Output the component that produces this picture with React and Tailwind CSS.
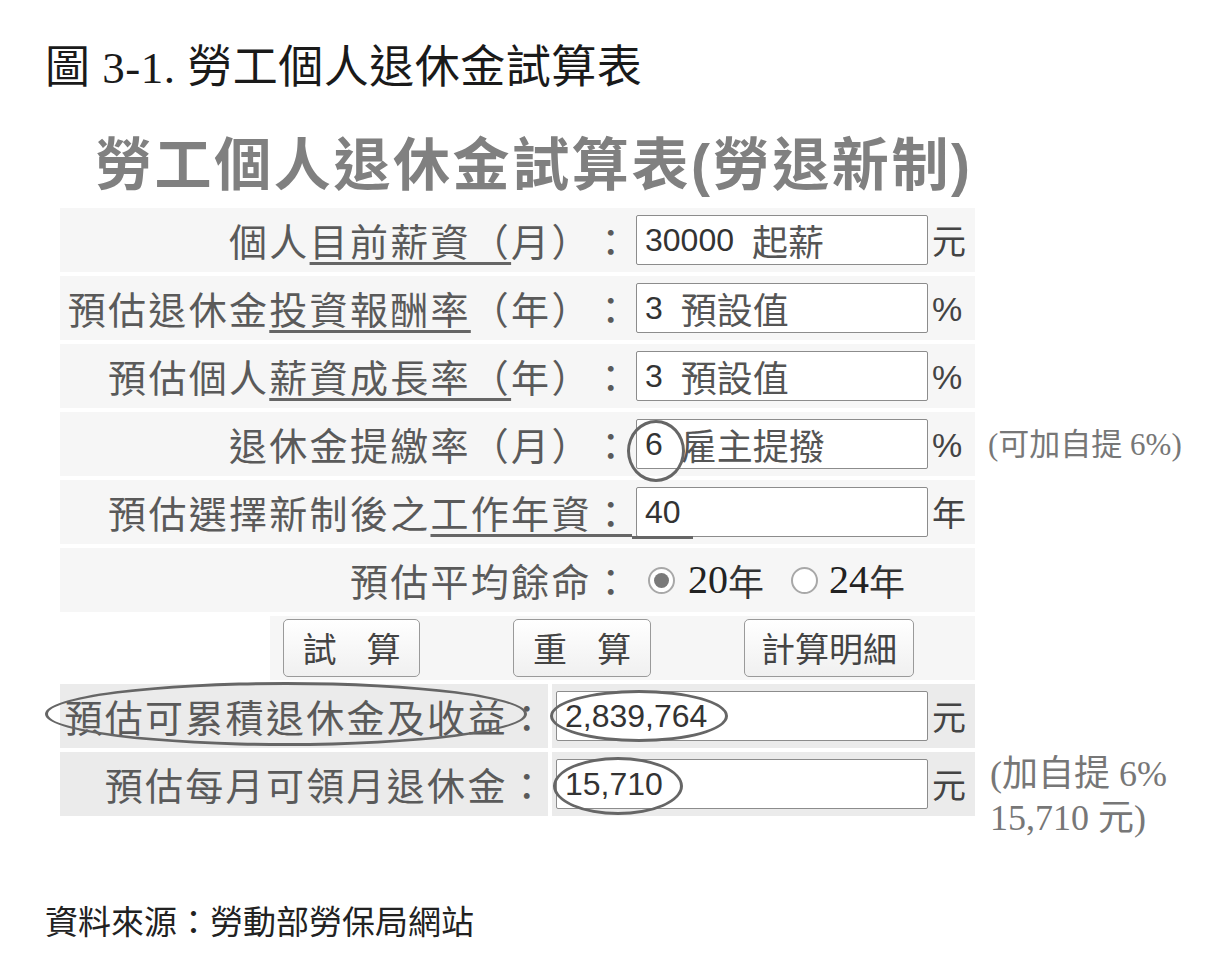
import React from 'react';

const CJK = '"Noto Sans CJK TC", "Liberation Sans", sans-serif';
const SERIF = '"Liberation Serif", "Noto Sans CJK TC", serif';

function Box({ children, wide }) {
  return (
    <div
      className={
        'h-[50px] bg-white border border-[#8c8c8c] rounded-[2px] flex items-center pl-[8px] ' +
        (wide ? 'w-[372px]' : 'w-[292px]')
      }
    >
      {children}
    </div>
  );
}

function Num({ children }) {
  return (
    <span className="text-[32px] leading-none text-[#333]" style={{ fontFamily: '"Liberation Sans", sans-serif' }}>
      {children}
    </span>
  );
}

function Hint({ children }) {
  return <span className="text-[36px] leading-none text-[#555] ml-[18px]">{children}</span>;
}

function Unit({ children }) {
  return <span className="ml-[4px] text-[34px] leading-none text-[#444]">{children}</span>;
}

const LABEL =
  'flex items-center justify-end whitespace-nowrap text-[38px] tracking-[2.3px] text-[#5a5a5a] leading-none [text-spacing-trim:space-all]';

function InputRow({ label, children, unit, note }) {
  return (
    <div className="flex h-[64px] mb-[4px]">
      <div className={'w-[572px] bg-[#f6f6f6] ' + LABEL}>{label}</div>
      <div className="w-[343px] bg-[#f6f6f6] flex items-center pl-[4px]">
        <Box>{children}</Box>
        <Unit>{unit}</Unit>
      </div>
      {note}
    </div>
  );
}

function ResultRow({ label, value, note }) {
  return (
    <div className="flex h-[64px] mb-[4px]">
      <div className={'w-[488px] bg-[#ebebeb] ' + LABEL}>{label}</div>
      <div className="w-[423px] ml-[4px] bg-[#ebebeb] flex items-center pl-[4px]">
        <Box wide>
          <Num>{value}</Num>
        </Box>
        <Unit>元</Unit>
      </div>
      {note}
    </div>
  );
}

function Radio({ on }) {
  return (
    <span className="w-[27px] h-[27px] rounded-full border-[2px] border-[#a8a8a8] bg-white flex items-center justify-center">
      {on && <span className="w-[15px] h-[15px] rounded-full bg-[#7a7a7a]" />}
    </span>
  );
}

function Btn({ children, w }) {
  return (
    <div
      className={
        'h-[58px] border border-[#9a9a9a] rounded-[5px] bg-gradient-to-b from-white to-[#f0f0f0] flex items-center justify-center text-[34px] text-[#444] leading-none ' +
        w
      }
    >
      {children}
    </div>
  );
}

const U = 'underline decoration-[#666] decoration-3 underline-offset-[6px]';
const PCT = <span style={{ fontFamily: '"Liberation Sans", sans-serif' }}>%</span>;

export default function App() {
  return (
    <div className="relative w-[1214px] h-[979px] bg-white overflow-hidden" style={{ fontFamily: CJK }}>
      <div className="pt-[40px] pl-[45px] text-[45px] tracking-[0.5px] leading-[56px] text-[#1a1a1a]" style={{ fontFamily: SERIF }}>
        圖 3-1. 勞工個人退休金試算表
      </div>

      <div className="mt-[37px] ml-[60px]">
        <div
          className="w-[915px] pl-[35px] text-[57px] leading-[64px] font-bold tracking-[2.6px] text-[#808080] mb-[11px]"
          style={{ fontFamily: '"Liberation Sans", "Noto Sans CJK TC", sans-serif' }}
        >
          勞工個人退休金試算表(勞退新制)
        </div>

        <InputRow
          label={
            <span>
              個人<span className={U}>目前薪資（</span>月）：
            </span>
          }
          unit="元"
        >
          <Num>30000</Num>
          <Hint>起薪</Hint>
        </InputRow>

        <InputRow
          label={
            <span>
              預估退休金<span className={U}>投資報酬率</span>（年）：
            </span>
          }
          unit={PCT}
        >
          <Num>3</Num>
          <Hint>預設值</Hint>
        </InputRow>

        <InputRow
          label={
            <span>
              預估個人<span className={U}>薪資成長率（</span>年）：
            </span>
          }
          unit={PCT}
        >
          <Num>3</Num>
          <Hint>預設值</Hint>
        </InputRow>

        <InputRow
          label="退休金提繳率（月）："
          unit={PCT}
          note={
            <div className="self-center ml-[13px] text-[31px] leading-none text-[#777]" style={{ fontFamily: SERIF }}>
              (可加自提 6%)
            </div>
          }
        >
          <Num>6</Num>
          <Hint>雇主提撥</Hint>
        </InputRow>

        <InputRow
          label={
            <span>
              預估選擇新制後之<span className={U}>工作年資：</span>
            </span>
          }
          unit="年"
        >
          <Num>40</Num>
        </InputRow>

        <div className="flex h-[64px] mb-[4px]">
          <div className={'w-[572px] bg-[#f6f6f6] ' + LABEL}>預估平均餘命：</div>
          <div className="w-[343px] bg-[#f6f6f6] flex items-center pl-[16px] text-[36px] leading-none text-[#333]">
            <Radio on />
            <span className="ml-[13px] text-[40px] text-[#222]" style={{ fontFamily: '"Liberation Serif", serif' }}>20</span>
            <span>年</span>
            <span className="ml-[27px]">
              <Radio />
            </span>
            <span className="ml-[11px] text-[40px] text-[#222]" style={{ fontFamily: '"Liberation Serif", serif' }}>24</span>
            <span>年</span>
          </div>
        </div>

        <div className="flex h-[64px] mb-[4px]">
          <div className="w-[210px] bg-white" />
          <div className="w-[705px] bg-[#f6f6f6] flex items-center pl-[13px] gap-[93px]">
            <Btn w="w-[137px] gap-[30px]">
              <span>試</span>
              <span>算</span>
            </Btn>
            <Btn w="w-[138px] gap-[30px]">
              <span>重</span>
              <span>算</span>
            </Btn>
            <Btn w="w-[170px]">計算明細</Btn>
          </div>
        </div>

        <ResultRow label="預估可累積退休金及收益：" value="2,839,764" />
        <ResultRow
          label="預估每月可領月退休金："
          value="15,710"
          note={
            <div className="self-start ml-[15px] text-[36px] leading-[44px] text-[#777] whitespace-nowrap" style={{ fontFamily: SERIF }}>
              (加自提 6%
              <br />
              15,710 元)
            </div>
          }
        />
      </div>

      <div className="mt-[84px] pl-[45px] text-[33px] leading-[40px] text-[#222] [text-spacing-trim:space-all]">資料來源：勞動部勞保局網站</div>

      {/* hand-drawn annotation marks */}
      <div className="absolute left-[632px] top-[536px] w-[61px] h-[3px] bg-[#666]" />
      <div className="absolute left-[627px] top-[420px] w-[58px] h-[62px] rounded-[50%] border-[3px] border-[#666]" />
      <div className="absolute left-[45px] top-[682px] w-[482px] h-[64px] rounded-[50%] border-[3px] border-[#666]" />
      <div className="absolute left-[550px] top-[690px] w-[178px] h-[52px] rounded-[50%] border-[3px] border-[#666]" />
      <div className="absolute left-[553px] top-[757px] w-[130px] h-[58px] rounded-[50%] border-[3px] border-[#666]" />
    </div>
  );
}
